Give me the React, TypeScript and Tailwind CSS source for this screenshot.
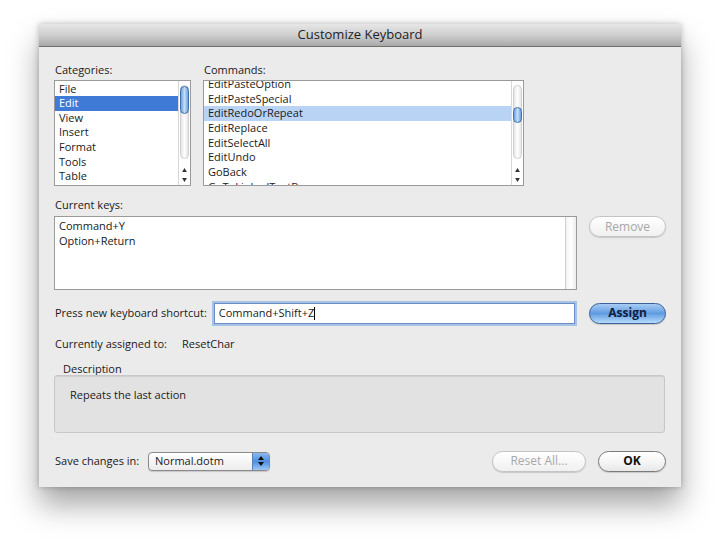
import React from 'react';

const font = { fontFamily: '"Open Sans", "Liberation Sans", sans-serif' };

function Scrollbar({ thumbTop, thumbHeight }: { thumbTop: number; thumbHeight: number }) {
  return (
    <div className="absolute right-0 top-0 bottom-0 w-[12px] bg-white border-l border-[#d8d8d8]">
      {/* track */}
      <div className="absolute left-[1px] right-[1px] top-[4px] bottom-[26px] rounded-full border border-[#cfcfcf] bg-gradient-to-r from-[#e6e6e6] via-white to-[#e6e6e6]" />
      {/* thumb */}
      <div
        className="absolute left-[1px] right-[1px] rounded-full border border-[#3a6fb0] bg-gradient-to-r from-[#6fa1de] via-[#c5dcf6] to-[#6fa1de]"
        style={{ top: thumbTop, height: thumbHeight }}
      />
      {/* arrows */}
      <div className="absolute left-0 right-0 bottom-[13px] flex justify-center">
        <svg width="5" height="4" viewBox="0 0 6 5"><path d="M3 0 L6 5 L0 5 Z" fill="#333" /></svg>
      </div>
      <div className="absolute left-0 right-0 bottom-[3px] flex justify-center">
        <svg width="5" height="4" viewBox="0 0 6 5"><path d="M0 0 L6 0 L3 5 Z" fill="#333" /></svg>
      </div>
    </div>
  );
}

function AquaButton({ label, variant, className }: { label: string; variant: 'default' | 'disabled' | 'normal'; className: string }) {
  const styles =
    variant === 'default'
      ? 'border-[#3c5f97] bg-gradient-to-b from-[#a9cdf4] via-[#5f9be0] to-[#b7dcfb] text-[#102040] font-bold'
      : variant === 'disabled'
      ? 'border-[#c4c4c4] bg-gradient-to-b from-white to-[#f0f0f0] text-[#a8a8a8]'
      : 'border-[#7a7a7a] bg-gradient-to-b from-white via-[#f6f6f6] to-[#e8e8e8] text-[#111] font-bold';
  return (
    <div className={`flex items-center justify-center rounded-full border text-[12px] whitespace-nowrap shadow-[0_1px_1px_rgba(0,0,0,0.15)] ${styles} ${className}`}>
      {label}
    </div>
  );
}

export default function App() {
  const categories = ['File', 'Edit', 'View', 'Insert', 'Format', 'Tools', 'Table'];
  const commands = ['EditPasteOption', 'EditPasteSpecial', 'EditRedoOrRepeat', 'EditReplace', 'EditSelectAll', 'EditUndo', 'GoBack', 'GoToLinkedTextBox'];

  return (
    <div className="w-[720px] h-[541px] bg-white overflow-hidden text-[11px] text-[#1a1a1a] whitespace-nowrap" style={font}>
      <div className="ml-[39px] mt-[24px] w-[642px] h-[463px] flex flex-col bg-[#ebebeb] shadow-[0_18px_28px_rgba(0,0,0,0.35),0_0_6px_rgba(0,0,0,0.25)]">
        {/* Title bar */}
        <div className="h-[23px] shrink-0 flex items-center justify-center bg-gradient-to-b from-[#e6e6e6] via-[#cfcfcf] to-[#a9a9a9] border-b border-[#6e6e6e] text-[13px] text-[#222]">
          Customize Keyboard
        </div>

        <div className="flex flex-col pl-[15px] pr-[15px]">
          {/* Lists */}
          <div className="flex mt-[15px] gap-[12px]">
            <div className="flex flex-col">
              <div className="h-[15px] leading-[15px] ml-[1px]">Categories:</div>
              <div className="relative mt-[3px] w-[137px] h-[106px] bg-white border border-[#9a9a9a] overflow-hidden">
                <div className="pt-[0.5px] pr-[12px]">
                  {categories.map((c) => (
                    <div
                      key={c}
                      className={`h-[14.67px] leading-[14.67px] pl-[4px] ${c === 'Edit' ? 'bg-[#3e7ad6] text-white' : ''}`}
                    >
                      {c}
                    </div>
                  ))}
                </div>
                <Scrollbar thumbTop={5} thumbHeight={28} />
              </div>
            </div>
            <div className="flex flex-col">
              <div className="h-[15px] leading-[15px] ml-[1px]">Commands:</div>
              <div className="relative mt-[3px] w-[321px] h-[106px] bg-white border border-[#9a9a9a] overflow-hidden">
                <div className="-mt-[4px] pr-[12px]">
                  {commands.map((c) => (
                    <div
                      key={c}
                      className={`h-[14.67px] leading-[14.67px] pl-[4px] ${c === 'EditRedoOrRepeat' ? 'bg-[#b9d3f5]' : ''}`}
                    >
                      {c}
                    </div>
                  ))}
                </div>
                <Scrollbar thumbTop={26} thumbHeight={16} />
              </div>
            </div>
          </div>

          {/* Current keys */}
          <div className="mt-[11px] h-[15px] leading-[15px] ml-[1px]">Current keys:</div>
          <div className="flex mt-[4px]">
            <div className="relative w-[523px] h-[74px] bg-white border border-[#9a9a9a]">
              <div className="pl-[4px] pt-[1px]">
                <div className="h-[15px] leading-[15px]">Command+Y</div>
                <div className="h-[15px] leading-[15px]">Option+Return</div>
              </div>
              <div className="absolute right-0 top-0 bottom-0 w-[11px] border-l border-[#cfcfcf] bg-gradient-to-r from-[#f3f3f3] via-white to-[#ececec]" />
            </div>
            <AquaButton label="Remove" variant="disabled" className="ml-[12px] w-[77px] h-[21px]" />
          </div>

          {/* Shortcut */}
          <div className="flex items-center mt-[12px] h-[22px]">
            <div className="ml-[1px] w-[159px]">Press new keyboard shortcut:</div>
            <div className="w-[362px] h-[21px] bg-white border border-[#6b8fc4] shadow-[0_0_0_2px_rgba(110,160,225,0.55)] flex items-center pl-[4px]">
              Command+Shift+Z<span className="inline-block w-[1px] h-[13px] bg-black ml-[0px]" />
            </div>
            <AquaButton label="Assign" variant="default" className="ml-[14px] w-[77px] h-[21px]" />
          </div>

          {/* Currently assigned */}
          <div className="flex mt-[12px] h-[15px] leading-[15px] ml-[1px]">
            <span className="w-[127px]">Currently assigned to:</span>
            <span>ResetChar</span>
          </div>

          {/* Description */}
          <div className="mt-[10px] ml-[9px] h-[15px] leading-[15px]">Description</div>
          <div className="mt-[-1px] w-[611px] h-[58px] rounded-[3px] bg-[#e2e2e2] border border-[#c8c8c8] shadow-[inset_0_1px_1px_rgba(0,0,0,0.08)]">
            <div className="ml-[15px] mt-[11px] h-[15px] leading-[15px]">Repeats the last action</div>
          </div>

          {/* Bottom row */}
          <div className="flex items-center mt-[17px] h-[22px]">
            <div className="ml-[1px] w-[93px]">Save changes in:</div>
            <div className="relative w-[122px] h-[19px] rounded-[4px] border border-[#8a8a8a] bg-gradient-to-b from-white to-[#ececec] flex items-center pl-[6px] shadow-[0_1px_1px_rgba(0,0,0,0.15)]">
              Normal.dotm
              <div className="absolute right-0 top-0 bottom-0 w-[17px] rounded-r-[3px] bg-gradient-to-b from-[#8cb8ec] via-[#4d8fe0] to-[#9cc6f3] border-l border-[#5a82b8] flex flex-col items-center justify-center gap-[2px]">
                <svg width="6" height="4" viewBox="0 0 6 4"><path d="M3 0 L6 4 L0 4 Z" fill="#111" /></svg>
                <svg width="6" height="4" viewBox="0 0 6 4"><path d="M0 0 L6 0 L3 4 Z" fill="#111" /></svg>
              </div>
            </div>
            <div className="flex-1" />
            <AquaButton label="Reset All..." variant="disabled" className="w-[94px] h-[21px]" />
            <AquaButton label="OK" variant="normal" className="ml-[12px] w-[68px] h-[21px]" />
          </div>
        </div>
      </div>
    </div>
  );
}
